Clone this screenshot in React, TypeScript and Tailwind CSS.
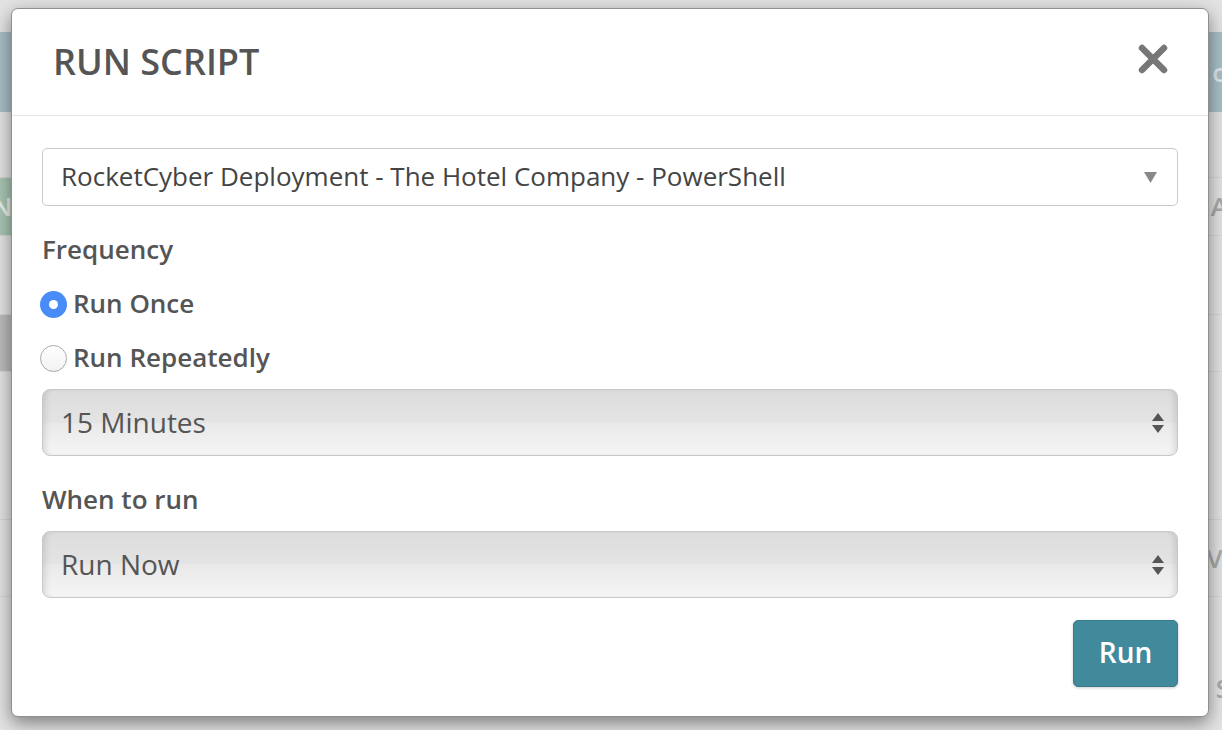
import React from 'react';

const font = { fontFamily: '"Open Sans", "Noto Sans", Arial, sans-serif' };

const UpDown = () => (
    <svg width="14" height="24" viewBox="0 0 14 24" className="shrink-0">
        <path d="M7 2 L13 10 L1 10 Z" fill="#555" />
        <path d="M1 14 L13 14 L7 22 Z" fill="#555" />
    </svg>
);

const GlossySelect = ({ value }: { value: string }) => (
    <div className="h-[67px] rounded-[8px] border border-[#c8c8c8] bg-[linear-gradient(to_bottom,#dcdcdc_0%,#e4e4e4_50%,#e9e9e9_50%,#f5f5f5_100%)] shadow-[inset_6px_0_6px_-4px_rgba(0,0,0,0.12),inset_-6px_0_6px_-4px_rgba(0,0,0,0.12)] flex items-center justify-between pl-[18px] pr-[12px]">
        <span className="text-[28px] text-[#555] mt-[-2px]">{value}</span>
        <UpDown />
    </div>
);

const Radio = ({ checked, label }: { checked?: boolean; label: string }) => (
    <div className="h-[36px] flex items-center">
        {checked ? (
            <span className="ml-[-2px] w-[27px] h-[27px] rounded-full bg-[#4a8cf7] flex items-center justify-center">
                <span className="w-[9px] h-[9px] rounded-full bg-white" />
            </span>
        ) : (
            <span className="ml-[-2px] w-[27px] h-[27px] rounded-full border border-[#a9a9a9] bg-[linear-gradient(to_bottom,#ffffff,#f2f2f2)]" />
        )}
        <span className="ml-[6px] text-[26px] font-semibold text-[#555] mt-[-2px]">{label}</span>
    </div>
);

const Background = () => (
    <div className="w-full h-full flex flex-col bg-[#e3e3e3] text-[#a9a9a9] text-[26px] font-semibold">
        <div className="h-[32px]" />
        <div className="h-[80px] bg-[#a8bfc7] flex items-center justify-end text-[#dfe8eb]">
            <span className="mr-[-6px]">o</span>
        </div>
        <div className="h-[66px] border-b border-[#d6d6d6]" />
        <div className="h-[58px] flex items-center justify-between border-b border-[#d6d6d6]">
            <div className="w-[40px] h-full bg-[#a9c6b3] text-[#e8efe9] flex items-center">
                <span className="ml-[-8px]">N</span>
            </div>
            <span className="mr-[-6px]">A</span>
        </div>
        <div className="h-[79px] border-b border-[#d6d6d6]" />
        <div className="h-[57px] flex border-b border-[#d6d6d6]">
            <div className="w-[40px] h-full bg-[#bcbcbc]" />
        </div>
        <div className="h-[148px] border-b border-[#d6d6d6]" />
        <div className="h-[77px] flex items-center justify-end border-b border-[#d6d6d6]">
            <span className="mr-[-8px]">Vi</span>
        </div>
        <div className="flex-1 flex items-end justify-end pb-[22px]">
            <span className="mr-[-8px]">S</span>
        </div>
    </div>
);

export default function App() {
    return (
        <div className="relative w-[1222px] h-[730px] overflow-hidden" style={font}>
            <Background />
            <div className="absolute left-[11px] top-[8px] w-[1198px] h-[709px] bg-white rounded-[7px] border border-[#8f8f8f] shadow-[0_6px_18px_rgba(0,0,0,0.45)] flex flex-col">
                <div className="h-[107px] border-b border-[#e5e5e5] flex items-center justify-between pl-[41px] pr-[40px] shrink-0">
                    <h2 className="text-[36px] font-semibold text-[#555]">RUN SCRIPT</h2>
                    <svg width="30" height="30" viewBox="0 0 30 30" className="mt-[-6px]">
                        <path d="M4 4 L26 26 M26 4 L4 26" stroke="#777" strokeWidth="6.5" strokeLinecap="round" />
                    </svg>
                </div>
                <div className="px-[30px] pt-[32px] flex flex-col">
                    <div className="h-[58px] rounded-[5px] border border-[#cbcbcb] bg-white flex items-center justify-between pl-[18px] pr-[20px]">
                        <span className="text-[26px] text-[#444] mt-[-2px]">RocketCyber Deployment - The Hotel Company - PowerShell</span>
                        <svg width="13" height="11" viewBox="0 0 13 11">
                            <path d="M0 0 L13 0 L6.5 11 Z" fill="#888" />
                        </svg>
                    </div>
                    <div className="mt-[25px] h-[36px] flex items-center text-[26px] font-semibold text-[#555]">Frequency</div>
                    <div className="mt-[19px]">
                        <Radio checked label="Run Once" />
                    </div>
                    <div className="mt-[18px]">
                        <Radio label="Run Repeatedly" />
                    </div>
                    <div className="mt-[13px]">
                        <GlossySelect value="15 Minutes" />
                    </div>
                    <div className="mt-[25px] h-[36px] flex items-center text-[26px] font-semibold text-[#555]">When to run</div>
                    <div className="mt-[14px]">
                        <GlossySelect value="Run Now" />
                    </div>
                    <div className="mt-[22px] flex justify-end">
                        <button className="w-[105px] h-[67px] rounded-[5px] bg-[#418a9c] border border-[#3a7c8c] text-white text-[28px] font-semibold shadow-[0_1px_3px_rgba(0,0,0,0.2)] pb-[3px]">
                            Run
                        </button>
                    </div>
                </div>
            </div>
        </div>
    );
}
